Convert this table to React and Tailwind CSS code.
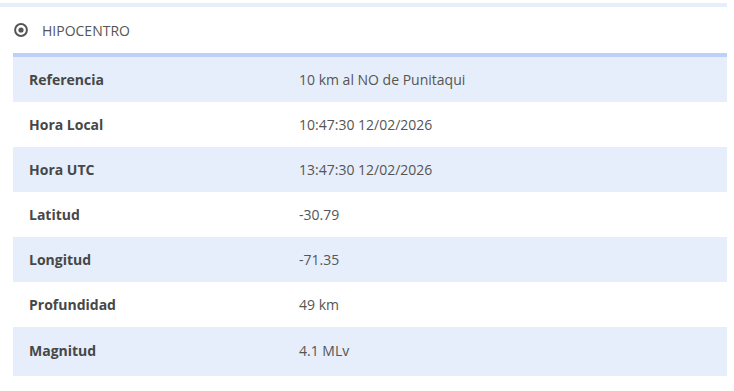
import React from "react";

const rows = [
  { label: "Referencia", value: "10 km al NO de Punitaqui" },
  { label: "Hora Local", value: "10:47:30 12/02/2026" },
  { label: "Hora UTC", value: "13:47:30 12/02/2026" },
  { label: "Latitud", value: "-30.79" },
  { label: "Longitud", value: "-71.35" },
  { label: "Profundidad", value: "49 km" },
  { label: "Magnitud", value: "4.1 MLv" },
];

export default function App() {
  return (
    <div
      className="w-[734px] h-[391px] bg-white pt-[3px]"
      style={{ fontFamily: "'Open Sans', 'Liberation Sans', sans-serif" }}
    >
      <div className="w-[727px]">
        {/* top divider */}
        <div className="h-[4px] bg-[#e7eefb]" />

        {/* section header */}
        <div className="flex items-center gap-[14px] pl-[14px] h-[46px] text-[14px] text-[#555]">
          <svg width="14" height="14" viewBox="0 0 14 14" className="shrink-0">
            <circle cx="7" cy="7" r="5.9" fill="none" stroke="#555" strokeWidth="2" />
            <circle cx="7" cy="7" r="2.6" fill="#555" />
          </svg>
          <span>HIPOCENTRO</span>
        </div>

        {/* data table */}
        <div className="ml-[13px] border-t-[4px] border-[#bdd1f7] text-[14px]">
          {rows.map((row, i) => (
            <div
              key={row.label}
              className={`flex items-center ${i === rows.length - 1 ? "h-[49px] pb-[3px]" : "h-[45px]"} ${
                i % 2 === 0 ? "bg-[#e6eefb]" : "bg-white"
              }`}
            >
              <div className="w-[270px] pl-[16px] font-bold text-[#474747]">{row.label}</div>
              <div className="pl-[16px] text-[#555]">{row.value}</div>
            </div>
          ))}
        </div>
      </div>
    </div>
  );
}
